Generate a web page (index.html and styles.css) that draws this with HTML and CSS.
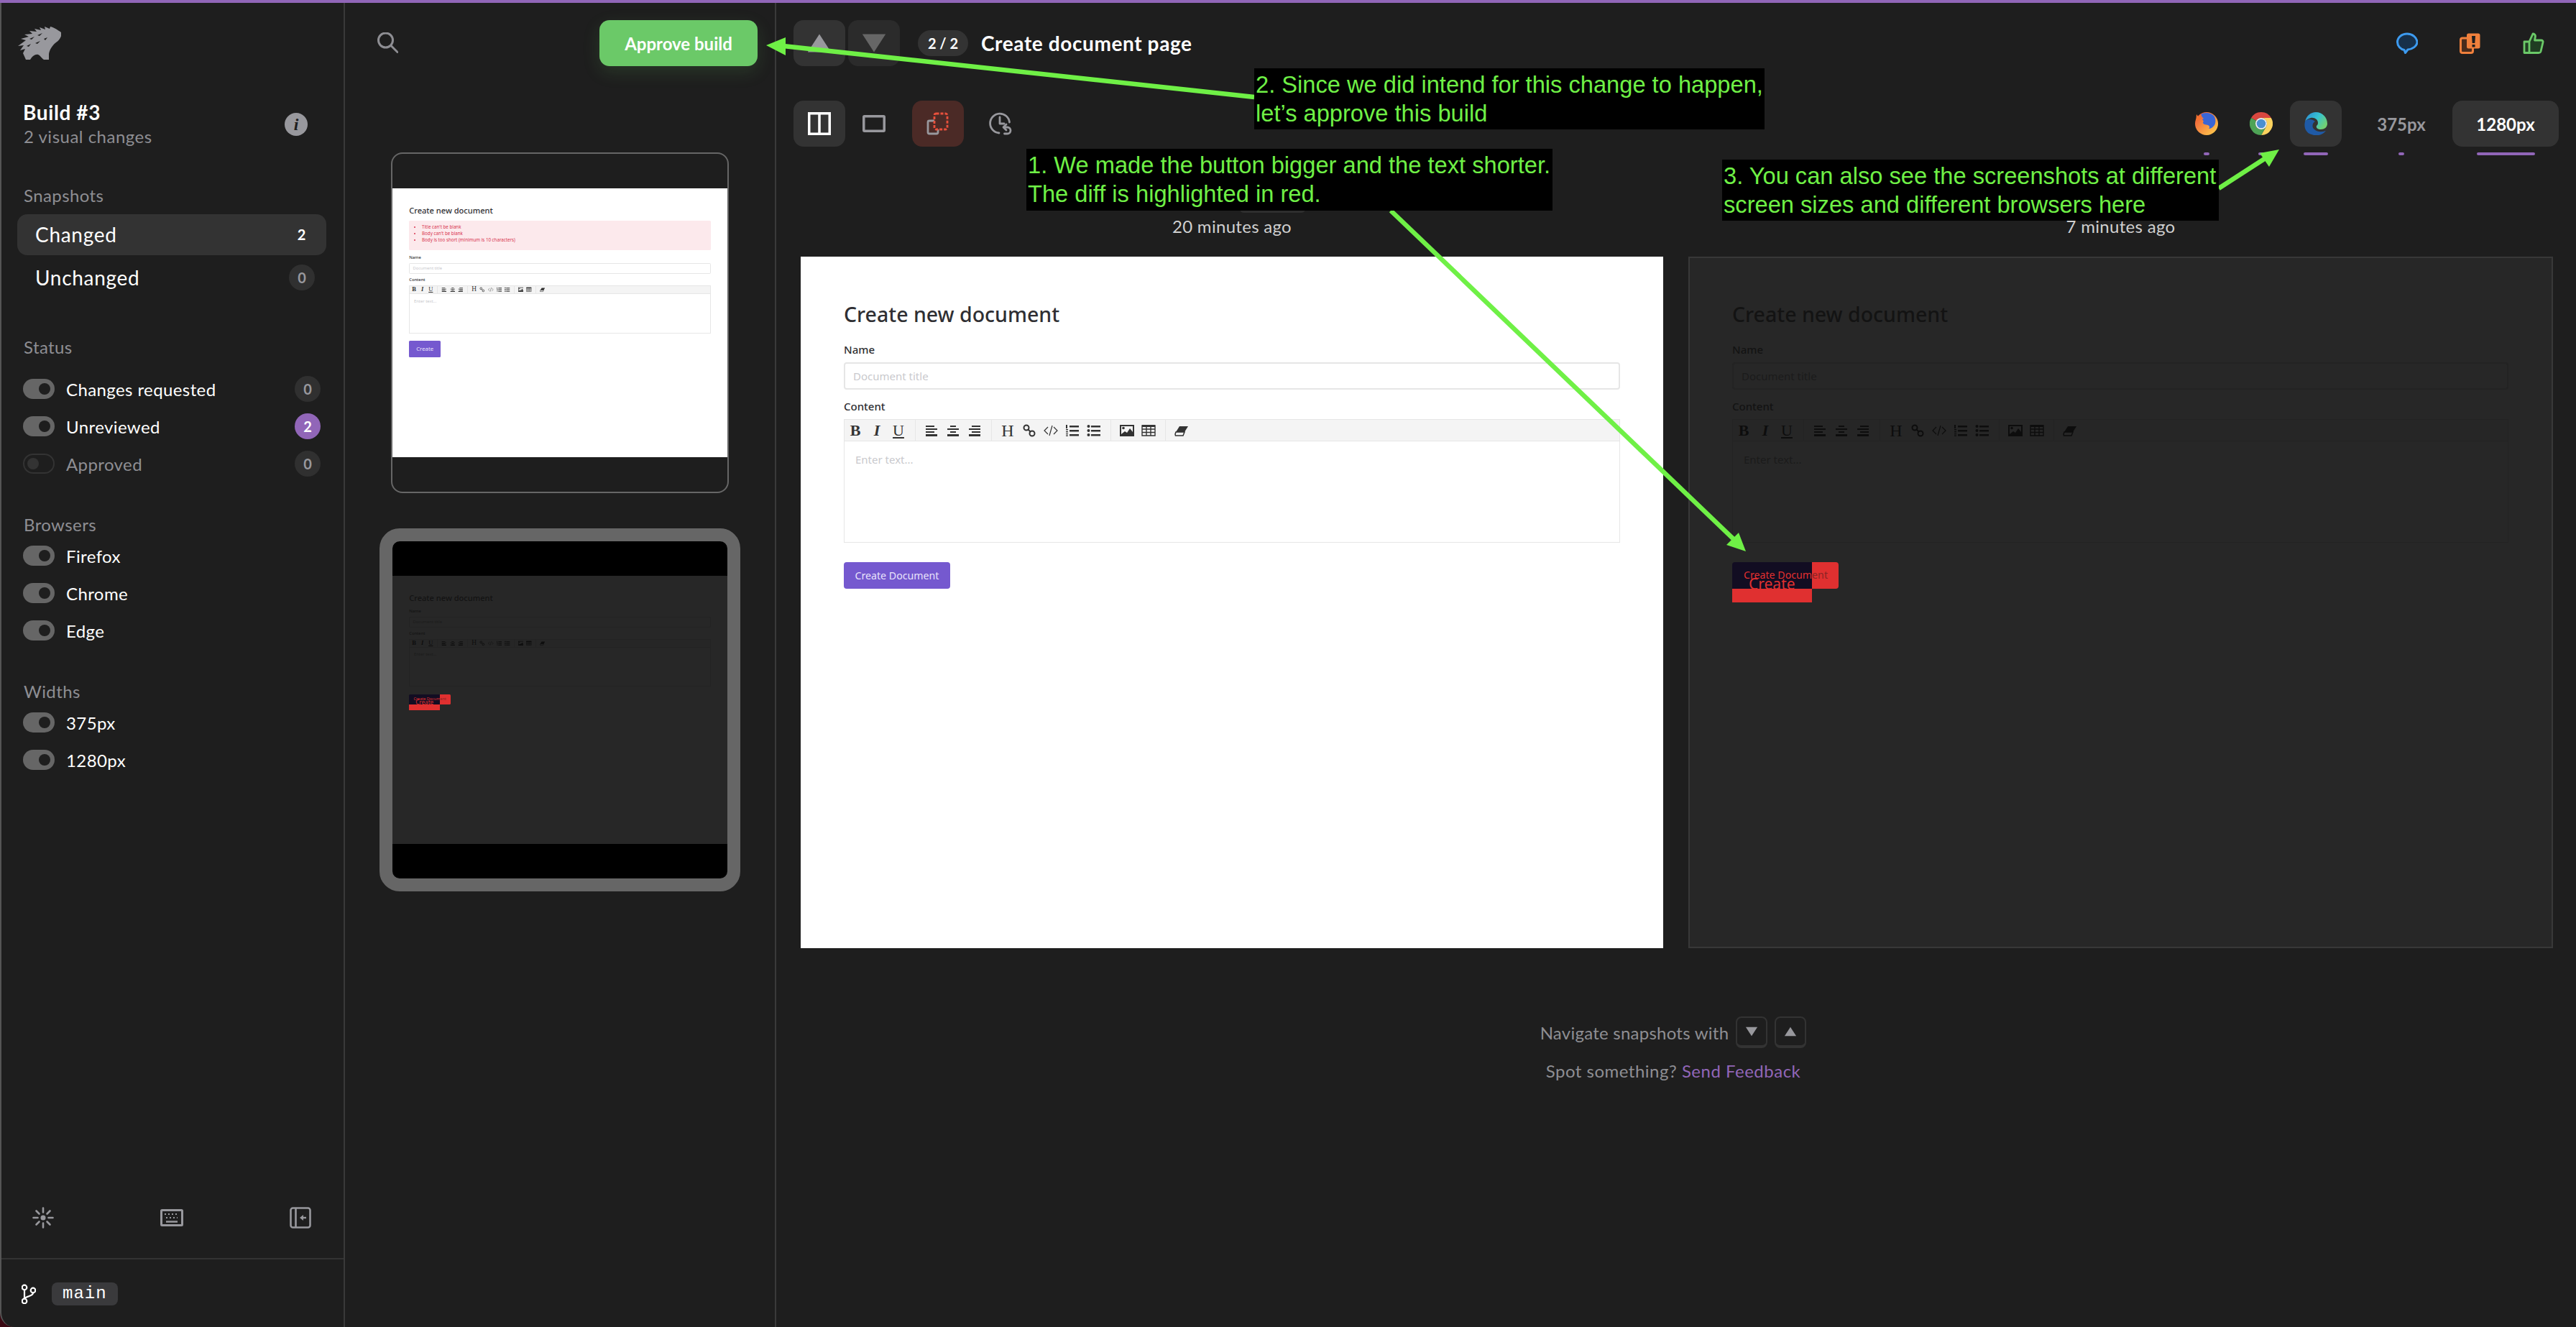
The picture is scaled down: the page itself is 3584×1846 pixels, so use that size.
FILE: index.html
```html
<!DOCTYPE html>
<html lang="en">
<head>
<meta charset="utf-8">
<title>Build #3</title>
<link rel="stylesheet" href="styles.css">
</head>
<body>
<svg class="defs" width="0" height="0" aria-hidden="true">
  <symbol id="i-left" viewBox="0 0 20 20"><path d="M2 3h12v2H2zM2 7h16v2H2zM2 11h12v2H2zM2 15h16v3H2z"/></symbol>
  <symbol id="i-center" viewBox="0 0 20 20"><path d="M6 3h8v2H6zM2 7h16v2H2zM6 11h8v2H6zM2 15h16v3H2z"/></symbol>
  <symbol id="i-right" viewBox="0 0 20 20"><path d="M6 3h12v2H6zM2 7h16v2H2zM6 11h12v2H6zM2 15h16v3H2z"/></symbol>
  <symbol id="i-link" viewBox="0 0 20 20"><g fill="none" stroke="currentColor" stroke-width="2"><circle cx="6" cy="6" r="3.5"/><circle cx="14" cy="14" r="3.5"/><path d="M8 8l4 4"/></g></symbol>
  <symbol id="i-code" viewBox="0 0 20 20"><path fill="none" stroke="currentColor" stroke-width="1.2" d="M6 5l-5 5 5 5M14 5l5 5-5 5M12 3L8 17"/></symbol>
  <symbol id="i-ol" viewBox="0 0 20 20"><path d="M6 3h13v2.500H6zM6 9h13v2.500H6zM6 15h13v2.500H6zM1 2h2v5H1zM1 8h3v1.500H1zM1 11h3v1.500H1zM1 14h3v1.300H1zM1 16.500h3v1.300H1z"/></symbol>
  <symbol id="i-ul" viewBox="0 0 20 20"><circle cx="2.500" cy="4" r="2"/><circle cx="2.500" cy="10" r="2"/><circle cx="2.500" cy="16" r="2"/><path d="M6 3h13v2.500H6zM6 9h13v2.500H6zM6 15h13v2.500H6z"/></symbol>
  <symbol id="i-image" viewBox="0 0 20 20"><path fill-rule="evenodd" d="M0 2h20v16H0zM2 4v11h16V4z"/><circle cx="5" cy="6.500" r="1.800"/><path d="M2 15l5-4 3 2 4-6 4 5v3z"/></symbol>
  <symbol id="i-table" viewBox="0 0 20 20"><path fill="none" stroke="currentColor" stroke-width="1.400" d="M1 3h18v14H1zM1 8h18M1 12.500h18M7 3v14M13 3v14"/><path d="M1 2h18v3H1z"/></symbol>
  <symbol id="i-eraser" viewBox="0 0 20 20"><path d="M7 4h12l-5 8H2z"/><path fill="none" stroke="currentColor" stroke-width="1.500" d="M2 12h12l-2 5H1.500L1 15z"/></symbol>
  <symbol id="toolbar-tri-up" viewBox="0 0 20 20"><path d="M10 3l9 14H1z"/></symbol>
  <symbol id="toolbar-tri-down" viewBox="0 0 20 20"><path d="M1 3h18l-9 14z"/></symbol>
</svg>

<div class="topline"></div>
<div class="app">

  <aside class="sidebar">
    <svg class="logo" viewBox="0 0 60 46" aria-label="Percy">
      <path fill="#98989d" d="M60 8C56 5 50 1 45 0l-1 3-7-3 1 4-8-3 2 4-9-2 3 4-10-1 4 4-11 1 6 3-11 3 7 2L0 27l8-1-5 7 7-2-3 6 4 9h6c3-5 7-8 11-7 3 1 5 5 8 7h7V38c1-6 5-12 10-16 4-2 8-8 8-14z"/>
      <path fill="#1e1e1e" d="M16 17l7-3-4 4zM27 12l7-3-4 4zM24 23l7-3-4 4zM36 17l5-2-3 4zM12 27l6-3-3 4z"/>
    </svg>

    <div class="build">
      <div>
        <div class="build-title">Build #3</div>
        <div class="build-sub">2 visual changes</div>
      </div>
      <span class="info">i</span>
    </div>

    <div class="label label-snap">Snapshots</div>
    <div class="snap-row active"><span>Changed</span><span class="snap-count">2</span></div>
    <div class="snap-row"><span>Unchanged</span><span class="count">0</span></div>

    <div class="label label-status">Status</div>
    <div class="filters filters-status">
      <div class="filter"><span class="toggle"></span><span class="filter-name">Changes requested</span><span class="count">0</span></div>
      <div class="filter"><span class="toggle"></span><span class="filter-name">Unreviewed</span><span class="count purple">2</span></div>
      <div class="filter"><span class="toggle off"></span><span class="filter-name muted">Approved</span><span class="count">0</span></div>
    </div>

    <div class="label label-group">Browsers</div>
    <div class="filters">
      <div class="filter"><span class="toggle"></span><span class="filter-name">Firefox</span></div>
      <div class="filter"><span class="toggle"></span><span class="filter-name">Chrome</span></div>
      <div class="filter"><span class="toggle"></span><span class="filter-name">Edge</span></div>
    </div>

    <div class="label label-group">Widths</div>
    <div class="filters">
      <div class="filter"><span class="toggle"></span><span class="filter-name">375px</span></div>
      <div class="filter"><span class="toggle"></span><span class="filter-name">1280px</span></div>
    </div>

    <div class="side-tools">
      <svg class="tool-sun" viewBox="0 0 30 30" fill="none" stroke="#98989d" stroke-width="2.600" stroke-linecap="round"><circle cx="15" cy="15" r="3.500" fill="#98989d" stroke="none"/><path d="M15 1.500v6M15 22.500v6M1.500 15h6M22.500 15h6M5.500 5.500l4 4M20.500 20.500l4 4M5.500 24.500l4-4M20.500 9.500l4-4"/></svg>
      <svg class="tool-key" viewBox="0 0 32 24" fill="none" stroke="#98989d"><rect x="1.500" y="1.500" width="29" height="21" stroke-width="3" rx="1"/><path stroke-width="2.200" stroke-dasharray="2 3" d="M6 7h20M8 12h16"/><path stroke-width="2.500" d="M8 17.500h16"/></svg>
      <svg class="tool-panel" viewBox="0 0 30 30" fill="none" stroke="#98989d" stroke-width="2.600"><rect x="1.500" y="1.500" width="27" height="27" rx="3"/><path d="M8.500 2v26"/><path stroke-width="2.400" d="M23 15h-6"/><path fill="#98989d" stroke="none" d="M14 15l5-4v8z"/></svg>
    </div>
    <div class="side-branch">
      <svg class="branch-icon" viewBox="0 0 20 28" fill="none" stroke="#fff" stroke-width="2.200"><circle cx="4" cy="5" r="3.300"/><circle cx="16" cy="9" r="3.300"/><circle cx="4" cy="24" r="3.300"/><path d="M4 8.500v12M16 12.500c0 5-9 4-12 8"/></svg>
      <code class="branch-name">main</code>
    </div>
  </aside>

  <section class="list">
    <div class="list-head">
      <svg class="search" viewBox="0 0 30 30" fill="none" stroke="#8e8e93" stroke-width="3" stroke-linecap="round"><circle cx="12.500" cy="11" r="10"/><path d="M20 18.500l9 9"/></svg>
      <button class="approve">Approve build</button>
    </div>
    <div class="thumbs">
      <div class="thumb">
        <div class="shot shot-light shot-small">
          <div class="form">
            <h1 class="form-title">Create new document</h1>
            <ul class="errors">
              <li>Title can't be blank</li>
              <li>Body can't be blank</li>
              <li>Body is too short (minimum is 10 characters)</li>
            </ul>
            <div class="form-label">Name</div>
            <div class="input">Document title</div>
            <div class="form-label">Content</div>
            <div class="toolbar">
              <div class="tb-group"><b class="tb-btn">B</b><i class="tb-btn">I</i><u class="tb-btn">U</u></div>
              <div class="tb-group"><svg class="tb-btn"><use href="#i-left"/></svg><svg class="tb-btn"><use href="#i-center"/></svg><svg class="tb-btn"><use href="#i-right"/></svg></div>
              <div class="tb-group"><span class="tb-btn tb-h">H</span><svg class="tb-btn"><use href="#i-link"/></svg><svg class="tb-btn"><use href="#i-code"/></svg><svg class="tb-btn"><use href="#i-ol"/></svg><svg class="tb-btn"><use href="#i-ul"/></svg></div>
              <div class="tb-group"><svg class="tb-btn"><use href="#i-image"/></svg><svg class="tb-btn"><use href="#i-table"/></svg></div>
              <div class="tb-group tb-last"><svg class="tb-btn"><use href="#i-eraser"/></svg></div>
            </div>
            <div class="editor">Enter text...</div>
            <div class="form-btn form-btn-big">Create</div>
          </div>
        </div>
      </div>
      <div class="thumb thumb-active">
        <div class="shot shot-dark shot-small">
          <div class="form">
            <h1 class="form-title">Create new document</h1>
            <div class="form-label">Name</div>
            <div class="input">Document title</div>
            <div class="form-label">Content</div>
            <div class="toolbar">
              <div class="tb-group"><b class="tb-btn">B</b><i class="tb-btn">I</i><u class="tb-btn">U</u></div>
              <div class="tb-group"><svg class="tb-btn"><use href="#i-left"/></svg><svg class="tb-btn"><use href="#i-center"/></svg><svg class="tb-btn"><use href="#i-right"/></svg></div>
              <div class="tb-group"><span class="tb-btn tb-h">H</span><svg class="tb-btn"><use href="#i-link"/></svg><svg class="tb-btn"><use href="#i-code"/></svg><svg class="tb-btn"><use href="#i-ol"/></svg><svg class="tb-btn"><use href="#i-ul"/></svg></div>
              <div class="tb-group"><svg class="tb-btn"><use href="#i-image"/></svg><svg class="tb-btn"><use href="#i-table"/></svg></div>
              <div class="tb-group tb-last"><svg class="tb-btn"><use href="#i-eraser"/></svg></div>
            </div>
            <div class="editor">Enter text...</div>
            <div class="diff-btn">
              <span class="diff-dark"></span><span class="diff-right"></span><span class="diff-below"></span>
              <span class="diff-text-a">Create Docum<span class="diff-dim">ent</span></span>
              <span class="diff-text-b">Create</span>
            </div>
          </div>
        </div>
      </div>
    </div>
  </section>

  <main class="main">
    <div class="bar bar-top">
      <div class="nav-group">
        <button class="square square-on"><svg class="tri tri-up"><use href="#toolbar-tri-up"/></svg></button>
        <button class="square square-dim"><svg class="tri tri-down"><use href="#toolbar-tri-down"/></svg></button>
      </div>
      <span class="pager">2 / 2</span>
      <span class="page-title">Create document page</span>
      <div class="review-icons">
        <svg class="review" viewBox="0 0 30 30"><path fill="#17304a" stroke="#3d9bf0" stroke-width="3" stroke-linejoin="round" d="M15 2C7.500 2 1.500 7 1.500 13.500c0 5.500 4.500 10 9.500 11l1.500 4 3.500-4.500c6.500-.5 13-5 13-10.500C28.500 7 22.500 2 15 2z"/></svg>
        <svg class="review review-req" viewBox="0 0 30 30"><rect x="1.500" y="8" width="17" height="20.500" rx="2.500" fill="#4a2c1c" stroke="#f0803c" stroke-width="3"/><rect x="10" y="1.500" width="18.500" height="21" rx="2.500" fill="#f0803c"/><path fill="#1e1e1e" d="M17 5h5l-.7 10h-3.600zM17.500 17h4v3.500h-4z"/></svg>
        <svg class="review" viewBox="0 0 30 30"><path fill="#1f3d22" stroke="#6bc968" stroke-width="2.800" stroke-linejoin="round" d="M9 13L14 2c2 0 3.500 1.500 3.500 3.500L16.500 11h9c2 0 3 1.500 2.500 3l-3 12.500c-.4 1.500-1.500 2-3 2H9zM9 13H2v15.500h7"/></svg>
      </div>
    </div>

    <div class="bar bar-second">
      <div class="view-group">
        <button class="square square-on">
          <svg class="view-icon" viewBox="0 0 32 32" fill="none" stroke="#fff" stroke-width="3.500"><rect x="1.750" y="1.750" width="28.500" height="28.500"/><path d="M16 2v28"/></svg>
        </button>
        <button class="square">
          <svg class="view-icon" viewBox="0 0 32 32" fill="none" stroke="#98989d" stroke-width="3.500"><rect x="1.750" y="5.750" width="28.500" height="20.500" rx="1"/></svg>
        </button>
        <button class="square square-red">
          <svg class="view-icon" viewBox="0 0 32 32" fill="none" stroke-width="2.800"><rect x="2" y="12" width="14" height="18" rx="2" stroke="#98989d"/><rect x="11" y="2" width="18" height="22" rx="2.500" stroke="#e8503c" stroke-dasharray="4 2" fill="#4b2a26"/></svg>
        </button>
        <button class="square">
          <svg class="view-icon" viewBox="0 0 32 32" fill="none" stroke="#98989d" stroke-width="2.800" stroke-linecap="round" stroke-linejoin="round"><path d="M14 29A13.500 13.500 0 1 1 28.500 14"/><path d="M15 7v9h6"/><path d="M24 17l-4 4 4 4"/><path d="M20.500 21h5a4.500 4.500 0 0 1 0 9h-4"/></svg>
        </button>
      </div>
      <div class="variants">
        <div class="variant">
          <button class="square square-plain">
            <svg class="browser" viewBox="0 0 32 32"><defs><linearGradient id="ff" x1="0" y1="0" x2="1" y2="1"><stop offset="0" stop-color="#ee4f36"/><stop offset="1" stop-color="#ffd34e"/></linearGradient></defs><circle cx="16" cy="16" r="16" fill="url(#ff)"/><path fill="#3a66d6" d="M8 3c5-3 13-3 18 2 3 4 3 10 1 13-2 3-5 5-8 5 2-2 1-4-1-5l-5-1c-2-1-3-3-1-4l-2-3 2-1-2-2c-1-2-1-3-2-4z"/><path fill="#f4722f" d="M1 14L2 3l3 4 3-4 1 6-3 2c-2 0-4 1-5 3z"/></svg>
          </button>
          <span class="mark mark-short"></span>
        </div>
        <div class="variant">
          <button class="square square-plain">
            <svg class="browser" viewBox="0 0 32 32"><path fill="#d9473f" d="M2.140 8A16 16 0 0 1 29.860 8L16 8A8 8 0 0 0 9.070 12Z"/><path fill="#fbd25e" d="M29.860 8A16 16 0 0 1 16 32L22.930 20A8 8 0 0 0 16 8Z"/><path fill="#4ea356" d="M16 32A16 16 0 0 1 2.140 8L9.070 12A8 8 0 0 0 22.930 20Z"/><circle cx="16" cy="16" r="8" fill="#f2f2f2"/><circle cx="16" cy="16" r="6.300" fill="#4a8fd0"/></svg>
          </button>
          <span class="mark mark-short"></span>
        </div>
        <div class="variant">
          <button class="square square-on">
            <svg class="browser" viewBox="0 0 32 32"><defs><linearGradient id="edge" x1="0" y1="0" x2="1" y2=".6"><stop offset="0" stop-color="#2a86d4"/><stop offset=".55" stop-color="#37c3d0"/><stop offset="1" stop-color="#72d072"/></linearGradient></defs><path fill="#1f5aa6" d="M1 13c-2 8 1 16 9 18 7 3 15 1 20-5-6 2-12 2-16-2-4-3-3-9 1-11C11 9 3 9 1 13z"/><path fill="url(#edge)" d="M1 13C3 5 9 0 16 0c9 0 16 7 16 16 0 5-4 8-9 8-4 0-7-2-6-5 1-1 2-2 2-4 0-5-5-8-10-7-4 1-7 3-8 5z"/></svg>
          </button>
          <span class="mark mark-long"></span>
        </div>
        <div class="variant variant-width">
          <button class="square square-text">375px</button>
          <span class="mark mark-short"></span>
        </div>
        <div class="variant">
          <button class="square square-text square-on square-wide">1280px</button>
          <span class="mark mark-wide"></span>
        </div>
      </div>
    </div>

    <div class="compare">
      <div class="pane">
        <div class="pane-time">20 minutes ago</div>
        <div class="shot shot-light">
          <div class="form">
            <h1 class="form-title">Create new document</h1>
            <div class="form-label">Name</div>
            <div class="input">Document title</div>
            <div class="form-label">Content</div>
            <div class="toolbar">
              <div class="tb-group"><b class="tb-btn">B</b><i class="tb-btn">I</i><u class="tb-btn">U</u></div>
              <div class="tb-group"><svg class="tb-btn"><use href="#i-left"/></svg><svg class="tb-btn"><use href="#i-center"/></svg><svg class="tb-btn"><use href="#i-right"/></svg></div>
              <div class="tb-group"><span class="tb-btn tb-h">H</span><svg class="tb-btn"><use href="#i-link"/></svg><svg class="tb-btn"><use href="#i-code"/></svg><svg class="tb-btn"><use href="#i-ol"/></svg><svg class="tb-btn"><use href="#i-ul"/></svg></div>
              <div class="tb-group"><svg class="tb-btn"><use href="#i-image"/></svg><svg class="tb-btn"><use href="#i-table"/></svg></div>
              <div class="tb-group tb-last"><svg class="tb-btn"><use href="#i-eraser"/></svg></div>
            </div>
            <div class="editor">Enter text...</div>
            <div class="form-btn">Create Document</div>
          </div>
        </div>
      </div>
      <div class="pane">
        <div class="pane-time">7 minutes ago</div>
        <div class="shot shot-dark shot-framed">
          <div class="form">
            <h1 class="form-title">Create new document</h1>
            <div class="form-label">Name</div>
            <div class="input">Document title</div>
            <div class="form-label">Content</div>
            <div class="toolbar">
              <div class="tb-group"><b class="tb-btn">B</b><i class="tb-btn">I</i><u class="tb-btn">U</u></div>
              <div class="tb-group"><svg class="tb-btn"><use href="#i-left"/></svg><svg class="tb-btn"><use href="#i-center"/></svg><svg class="tb-btn"><use href="#i-right"/></svg></div>
              <div class="tb-group"><span class="tb-btn tb-h">H</span><svg class="tb-btn"><use href="#i-link"/></svg><svg class="tb-btn"><use href="#i-code"/></svg><svg class="tb-btn"><use href="#i-ol"/></svg><svg class="tb-btn"><use href="#i-ul"/></svg></div>
              <div class="tb-group"><svg class="tb-btn"><use href="#i-image"/></svg><svg class="tb-btn"><use href="#i-table"/></svg></div>
              <div class="tb-group tb-last"><svg class="tb-btn"><use href="#i-eraser"/></svg></div>
            </div>
            <div class="editor">Enter text...</div>
            <div class="diff-btn">
              <span class="diff-dark"></span><span class="diff-right"></span><span class="diff-below"></span>
              <span class="diff-text-a">Create Docum<span class="diff-dim">ent</span></span>
              <span class="diff-text-b">Create</span>
            </div>
          </div>
        </div>
      </div>
    </div>

    <footer class="main-foot">
      <div class="foot-nav">Navigate snapshots with
        <kbd class="key"><svg class="key-tri"><use href="#toolbar-tri-down"/></svg></kbd>
        <kbd class="key"><svg class="key-tri"><use href="#toolbar-tri-up"/></svg></kbd>
      </div>
      <div class="foot-spot">Spot something? <a class="foot-link">Send Feedback</a></div>
    </footer>
  </main>
</div>

<span class="peek"></span>
<svg class="arrows" viewBox="0 0 3584 1846" aria-hidden="true">
  <g stroke="#6ff046" stroke-width="6.500" fill="#6ff046">
    <path d="M1745 135L1090 64"/>
    <path stroke="none" d="M1066 63L1093 52V77Z"/>
    <path d="M1935 293L2412 750"/>
    <path stroke="none" d="M2429 767L2402 758 2419 741Z"/>
    <path d="M3087 262L3152 220"/>
    <path stroke="none" d="M3171 208L3144 213 3157 232Z"/>
  </g>
</svg>
<div class="note note-2">2. Since we did intend for this change to happen,<br>let’s approve this build</div>
<div class="note note-1">1. We made the button bigger and the text shorter.<br>The diff is highlighted in red.</div>
<div class="note note-3">3. You can also see the screenshots at different<br>screen sizes and different browsers here</div>
</body>
</html>
```

FILE: styles.css
```css
* { box-sizing: border-box; }

html, body { margin: 0; height: 100%; }

body {
  position: relative;
  width: 3584px;
  height: 1846px;
  overflow: hidden;
  background: #3a0812;
  color: #fff;
  font-family: "Lato", "Liberation Sans", sans-serif;
  font-size: 24px;
}

.defs { position: absolute; }

.topline { height: 4px; background: #9166b8; }

.app {
  display: flex;
  height: 1842px;
  border-left: 2px solid #555;
  border-bottom-left-radius: 20px;
  background: #1e1e1e;
}

button {
  border: 0;
  padding: 0;
  font: inherit;
  color: inherit;
  background: none;
}

/* sidebar */
.sidebar {
  display: flex;
  flex-direction: column;
  flex: 0 0 478px;
  border-right: 2px solid #3a3a3a;
}

.logo { width: 60px; height: 46px; margin: 33px 0 0 23px; flex: none; }

.build {
  display: flex;
  align-items: center;
  justify-content: space-between;
  margin-top: 56px;
  padding: 0 50px 0 31px;
}

.build-title { font-size: 28px; font-weight: 700; line-height: 34px; letter-spacing: .6px; margin-left: -1px; }
.build-sub { font-size: 24px; line-height: 34px; color: #8e8e93; letter-spacing: .5px; }

.info {
  width: 32px;
  height: 32px;
  border-radius: 50%;
  background: #98989d;
  color: #1e1e1e;
  font: italic 700 24px/32px "Liberation Serif", serif;
  text-align: center;
}

.label { font-size: 24px; line-height: 30px; color: #8e8e93; padding-left: 31px; letter-spacing: .4px; }
.label-snap { margin-top: 50px; margin-bottom: 11px; }
.label-status { margin-top: 50px; }
.label-group { margin-top: 44px; }

.snap-row {
  display: flex;
  align-items: center;
  justify-content: space-between;
  height: 57px;
  margin: 0 24px 3px 22px;
  padding: 0 16px 2px 25px;
  border-radius: 14px;
  font-size: 28px;
  letter-spacing: .7px;
}

.snap-row.active { background: #333; }

.snap-count {
  width: 36px;
  font-size: 20px;
  font-weight: 700;
  text-align: center;
}

.count {
  width: 36px;
  height: 36px;
  border-radius: 50%;
  background: #303030;
  color: #98989d;
  font-size: 20px;
  font-weight: 700;
  line-height: 36px;
  text-align: center;
  letter-spacing: 0;
}

.count.purple { background: #9166b8; color: #fff; }

.filters { padding: 2px 32px 0 30px; }
.filters-status { padding-top: 17px; }

.filter { display: flex; align-items: center; height: 52px; }

.toggle {
  position: relative;
  flex: none;
  width: 44px;
  height: 28px;
  margin-right: 16px;
  border-radius: 14px;
  background: #666;
}

.toggle::after {
  content: "";
  position: absolute;
  top: 6px;
  right: 6px;
  width: 16px;
  height: 16px;
  border-radius: 50%;
  background: #1e1e1e;
}

.toggle.off { background: none; border: 2px solid #333; }
.toggle.off::after { top: 4px; right: auto; left: 4px; background: #333; }

.filter-name { flex: 1; letter-spacing: .4px; }
.filter-name.muted { color: #8e8e93; }

.side-tools {
  display: flex;
  flex: none;
  align-items: center;
  justify-content: space-between;
  margin-top: auto;
  height: 84px;
  padding: 0 45px 30px 43px;
  border-bottom: 2px solid #333;
}

.tool-sun { width: 30px; height: 30px; }
.tool-key { width: 32px; height: 24px; }
.tool-panel { width: 30px; height: 30px; }

.side-branch { display: flex; flex: none; align-items: center; gap: 22px; height: 94px; padding: 2px 0 0 28px; }
.branch-icon { width: 20px; height: 28px; }
.branch-name {
  height: 32px;
  padding: 0 15px;
  border-radius: 8px;
  background: #3a3a3c;
  font: 24px/32px "Liberation Mono", monospace;
  letter-spacing: 1px;
}

/* list */
.list { flex: 0 0 600px; border-right: 2px solid #3a3a3a; }

.list-head {
  display: flex;
  align-items: center;
  justify-content: space-between;
  height: 64px;
  margin-top: 24px;
  padding: 0 24px 0 44px;
}

.search { width: 30px; height: 30px; }

.approve {
  width: 220px;
  height: 64px;
  border-radius: 14px;
  background: #6bc968;
  color: #fff;
  font-weight: 700;
  box-shadow: 0 8px 24px rgba(107, 201, 104, .15);
}

.thumbs { display: flex; flex-direction: column; align-items: center; gap: 49px; padding: 120px 0 0; }

.thumb {
  padding: 48px 0;
  border: 2px solid #666;
  border-radius: 16px;
}

.thumb-active {
  border: 18px solid #666;
  border-radius: 28px;
  background: #000;
}

/* screenshots */
.shot { width: 1200px; height: 962px; overflow: hidden; font-family: "Noto Sans", "Open Sans", sans-serif; }
.shot-small { zoom: .3885; }
.shot-light { background: #fff; color: #2f2f33; --line: #e6e6e6; --hold: #c9c9cd; --tool: #f4f4f4; --ink: #333; }
.shot-dark { background: #272727; color: #131313; --line: #232323; --hold: #1b1b1b; --tool: #262626; --ink: #0d0d0d; }
.shot-framed { width: 1203px; border: 2px solid #383838; }
.shot-framed .form { padding: 58px 60px 60px 59px; }

.form { padding: 60px; }
.form-title { margin: 0; font-size: 28.500px; font-weight: 500; line-height: 40px; }
.form-label { margin-top: 17px; font-size: 15px; font-weight: 500; line-height: 24px; }
.input + .form-label { margin-top: 11px; }

.errors {
  height: 105px;
  margin: 16px 0 10px;
  padding: 14px 0 0 46px;
  border-radius: 4px;
  background: #fce9ec;
  color: #d8334f;
  font-size: 16px;
  line-height: 22px;
}

.input {
  height: 38px;
  margin-top: 6px;
  padding-left: 11px;
  border: 2px solid var(--line);
  border-radius: 4px;
  color: var(--hold);
  font-size: 15px;
  line-height: 34px;
}

.toolbar {
  display: flex;
  height: 31px;
  margin-top: 6px;
  border: 1px solid var(--line);
  background: var(--tool);
  color: var(--ink);
  fill: var(--ink);
}

.tb-group { display: flex; align-items: center; height: 100%; padding: 0 8px 0 7px; border-right: 1px solid var(--line); }
.tb-group:first-child { padding-left: 0; }
.tb-last { border-right: 0; }

.tb-btn {
  display: block;
  width: 30px;
  height: 20px;
  font: 22px/20px "Liberation Serif", serif;
  text-align: center;
}

svg.tb-btn { padding: 0 5px; }
b.tb-btn { font-weight: 700; }
i.tb-btn { font-style: italic; font-weight: 700; }
.tb-h { font-size: 24px; }

.editor {
  height: 141px;
  padding: 15px 15px;
  border: 1px solid var(--line);
  border-top: 0;
  color: var(--hold);
  font-size: 15px;
}

.form-btn {
  width: 148px;
  height: 37px;
  margin-top: 27px;
  border-radius: 4px;
  background: #7559cf;
  color: #e9e3fb;
  font-size: 14.200px;
  line-height: 37px;
  text-align: center;
}

.form-btn-big { width: 113px; height: 58px; font-size: 20px; line-height: 58px; }

.diff-btn { position: relative; width: 148px; height: 56px; margin-top: 27px; }
.diff-btn span { position: absolute; }
.diff-dark { left: 0; top: 0; width: 111px; height: 37px; background: #120d22; border-radius: 4px 0 0 0; }
.diff-right { left: 111px; top: 0; width: 37px; height: 37px; background: #e03030; border-radius: 0 4px 4px 0; }
.diff-below { left: 0; top: 37px; width: 111px; height: 19px; background: #e03030; }
.diff-text-a { left: 16px; top: 8px; color: #e03030; font-size: 14.200px; line-height: 20px; white-space: nowrap; }
.diff-btn .diff-dim { position: static; color: #8a2424; }
.diff-text-b { left: 23px; top: 16px; color: #e03030; font-size: 21px; line-height: 28px; }

/* main */
.main { flex: 1; padding: 24px 32px 0 24px; min-width: 0; }

.bar { display: flex; align-items: center; }
.bar-top { height: 64px; }
.bar-second { align-items: flex-start; height: 76px; margin-top: 48px; }

.nav-group, .view-group { display: flex; gap: 4px; }

.square {
  display: flex;
  align-items: center;
  justify-content: center;
  width: 72px;
  height: 64px;
  border-radius: 14px;
}

.square-on { background: #333; }
.square-dim { background: #2b2b2b; }
.square-red { background: #4b2a26; }
.tri { width: 40px; height: 36px; }
.tri-up { fill: #98989d; }
.tri-down { fill: #666; }

.pager {
  width: 70px;
  height: 36px;
  margin-left: 25px;
  border-radius: 18px;
  background: #333;
  font-size: 20px;
  font-weight: 700;
  line-height: 36px;
  text-align: center;
}

.page-title { margin-left: 18px; font-size: 28px; font-weight: 700; letter-spacing: .6px; }

.review-icons { display: flex; gap: 58px; margin-left: auto; margin-right: 12px; }
.review { width: 30px; height: 30px; }

.view-group .square:nth-child(3) { margin-left: 13px; }
.view-group .square:nth-child(4) { margin-left: 17px; width: 60px; }
.view-icon { width: 32px; height: 32px; }

.variants { display: flex; margin-left: auto; margin-right: -8px; }
.variant { display: flex; flex-direction: column; align-items: center; gap: 8px; }
.square-plain { width: 72px; }
.variant:nth-child(1), .variant:nth-child(2) { margin-right: 4px; }
.browser { width: 32px; height: 32px; }
.square-text { color: #98989d; font-weight: 700; }
.square-text.square-on { color: #fff; }
.variant-width { margin: 0 31px 0 43px; }
.variant-width .square { width: 80px; }
.square-wide { width: 148px; }

.mark { display: block; height: 4px; border-radius: 2px; background: #9166b8; }
.mark-short { width: 8px; }
.mark-long { width: 34px; }
.mark-wide { width: 81px; }

.compare {
  display: grid;
  grid-template-columns: 1200px 1203px;
  gap: 35px;
  margin: 84px 0 0 10px;
}

.pane-time { height: 30px; margin-bottom: 27px; color: #d0d0d0; font-size: 24px; line-height: 30px; text-align: center; letter-spacing: .3px; }

.main-foot { margin-top: 95px; color: #8e8e93; text-align: center; letter-spacing: .25px; }
.foot-nav { display: flex; align-items: center; justify-content: center; gap: 10px; height: 44px; }
.foot-spot { margin-top: 17px; line-height: 30px; letter-spacing: .5px; }
.foot-link { color: #9166b8; }

.key {
  display: flex;
  align-items: center;
  justify-content: center;
  width: 44px;
  height: 44px;
  border: 2px solid #333;
  border-bottom-width: 4px;
  border-radius: 8px;
}

.key-tri { width: 18px; height: 18px; fill: #98989d; }

/* annotations */
.peek { position: absolute; left: 1725px; top: 285px; width: 91px; height: 11px; border-radius: 6px; background: #2e2e2e; }

.arrows { position: absolute; left: 0; top: 0; width: 3584px; height: 1846px; pointer-events: none; }

.note {
  position: absolute;
  padding: 3px 0 0 2px;
  background: #000;
  color: #6ff046;
  font: 32.650px/40px "Liberation Sans", Arial, sans-serif;
  white-space: nowrap;
}

.note-1 { left: 1428px; top: 207px; width: 732px; height: 86px; }
.note-2 { left: 1745px; top: 95px; width: 710px; height: 85px; }
.note-3 { left: 2396px; top: 222px; width: 691px; height: 85px; }
```
